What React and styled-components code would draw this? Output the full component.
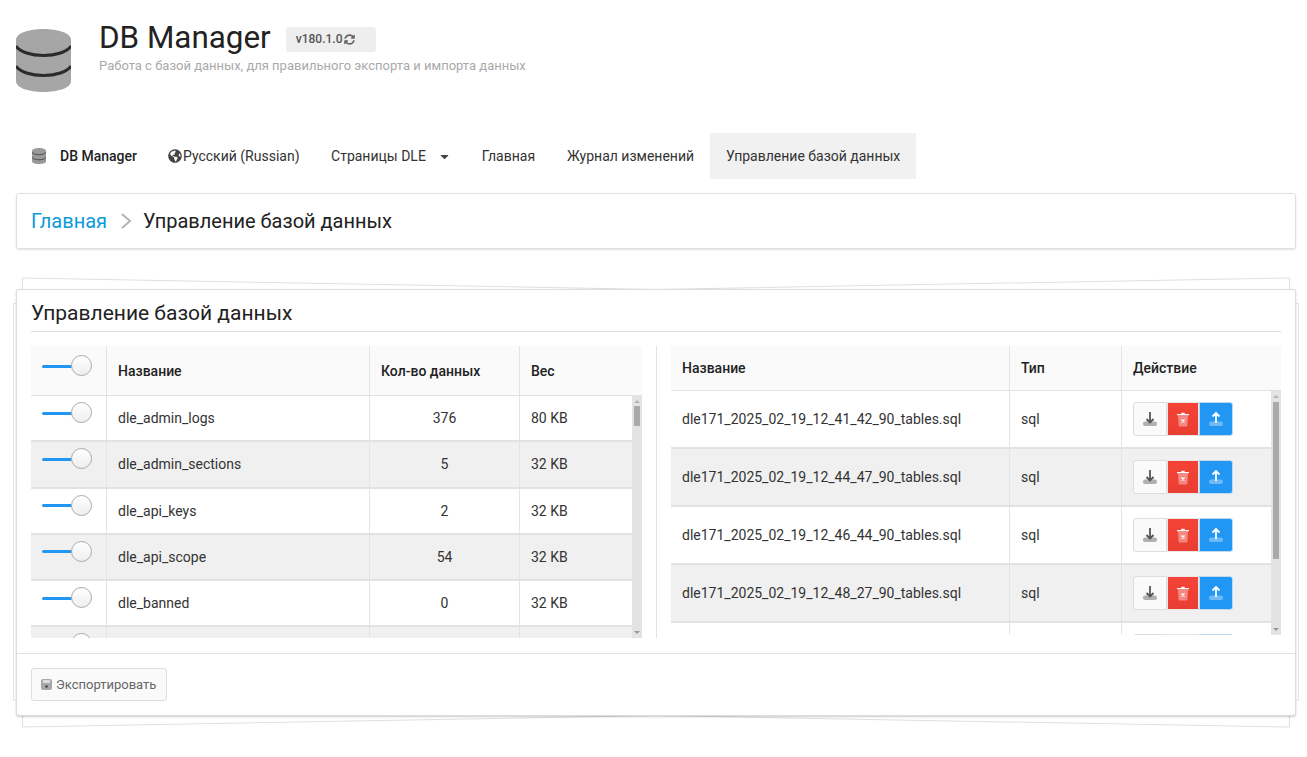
import styled, {createGlobalStyle} from "styled-components";
import {FaCaretDown, FaGlobeAmericas, FaSyncAlt} from "react-icons/fa";

const Global = createGlobalStyle`
  html, body {
    margin: 0;
    padding: 0;
    background: #fff;
  }
  body {
    font-family: Roboto, "Liberation Sans", sans-serif;
    color: #333;
    font-size: 14px;
  }
`;

const Page = styled.div`
  padding: 0 11px 41px 16px;
`;

const Header = styled.header`
  display: flex;
  height: 133px;
  padding-top: 29px;
  box-sizing: border-box;
`;

const HeaderText = styled.div`
  margin-left: 28px;
  margin-top: -11px;
`;

const TitleLine = styled.div`
  display: flex;
  align-items: center;
  height: 39px;
`;

const Title = styled.h1`
  margin: 0;
  font-size: 31.4px;
  font-weight: 400;
  color: #222;
`;

const Version = styled.span`
  display: flex;
  align-items: center;
  gap: 2px;
  box-sizing: border-box;
  width: 90px;
  height: 25px;
  margin-left: 15px;
  margin-top: 4px;
  padding: 0 0 1px 10px;
  background: #eee;
  border-radius: 3px;
  font-size: 12px;
  font-weight: 500;
  color: #555;
`;

const Subtitle = styled.div`
  margin-top: 1px;
  font-size: 13px;
  color: #aaa;
`;

const Nav = styled.nav`
  display: flex;
  height: 46px;
  margin-bottom: 14px;
`;

const NavItem = styled.div`
  display: flex;
  align-items: center;
  gap: ${(props) => props.$gap || 0}px;
  padding: 0 ${(props) => props.$right || 16}px 0 ${(props) => props.$left || 16}px;
  color: ${(props) => (props.$brand ? "#222" : "#333")};
  font-weight: ${(props) => (props.$brand ? 500 : 400)};
  background: ${(props) => (props.$active ? "#f1f1f1" : "transparent")};
`;

const BrandIcon = styled.svg`
  width: 14px;
  height: 16px;
  margin-right: 14px;
`;

const Caret = styled(FaCaretDown)`
  width: 11px;
  height: 13px;
  margin-left: 13px;
  color: #444;
`;

const Crumbs = styled.div`
  display: flex;
  align-items: center;
  box-sizing: border-box;
  height: 56px;
  padding-left: 14px;
  border: 1px solid #e0e0e0;
  border-radius: 3px;
  box-shadow: 0 1px 2px rgba(0, 0, 0, 0.12);
  font-size: 20px;
  color: #222;
  margin-bottom: 40px;
`;

const CrumbLink = styled.a`
  color: #0c9ad8;
`;

const CrumbSep = styled.svg`
  width: 12px;
  height: 18px;
  margin: 0 11px 0 13px;
`;

const CardWrap = styled.div`
  position: relative;
  isolation: isolate;
`;

const Sheet = styled.div`
  position: absolute;
  z-index: -1;
  top: 0;
  bottom: 0;
  left: 6px;
  right: 6px;
  background: #fff;
  border: 1px solid #dfdfdf;
  transform: skewY(${(props) => props.$skew}deg);
`;

const SideSheet = styled.div`
  position: absolute;
  z-index: -1;
  top: 14px;
  bottom: 15px;
  left: -3px;
  right: -3px;
  background: #fff;
  border: 1px solid #e4e4e4;
`;

const Card = styled.section`
  box-sizing: border-box;
  height: 427px;
  background: #fff;
  border: 1px solid #ddd;
  border-radius: 3px;
  box-shadow: 0 1px 2px rgba(0, 0, 0, 0.2);
`;

const CardBody = styled.div`
  box-sizing: border-box;
  height: 364px;
  padding: 0 14px;
  border-bottom: 1px solid #e0e0e0;
`;

const CardTitle = styled.h2`
  margin: 0 0 14px;
  height: 41px;
  line-height: 46px;
  font-size: 21px;
  font-weight: 400;
  color: #222;
  border-bottom: 1px solid #ddd;
`;

const Columns = styled.div`
  display: flex;
  height: 292px;
`;

const Panel = styled.div`
  width: ${(props) => props.$width}px;
  overflow: hidden;
`;

const Divider = styled.div`
  width: 1px;
  margin: 0 14px;
  background: #e4e4e4;
`;

const HeadRow = styled.div`
  display: grid;
  grid-template-columns: ${(props) => props.$cols};
  height: ${(props) => props.$height}px;
  background: #fafafa;
  border-bottom: 1px solid #e2e2e2;
  border-radius: 3px 3px 0 0;
  font-weight: 500;
  color: #222;
`;

const BodyWrap = styled.div`
  display: flex;
  height: ${(props) => props.$height}px;
  overflow: hidden;
`;

const Rows = styled.div`
  flex: 1;
  min-width: 0;
`;

const Row = styled.div`
  display: grid;
  grid-template-columns: ${(props) => props.$cols};
  box-sizing: border-box;
  height: ${(props) => props.$height}px;
  border-bottom: 2px solid #e2e2e2;
  &:nth-child(even) {
    background: #f0f0f0;
  }
`;

const Cell = styled.div`
  display: flex;
  align-items: center;
  justify-content: ${(props) => (props.$center ? "center" : "flex-start")};
  padding: 0 11px;
  border-right: ${(props) => (props.$last ? "0" : "1px solid #e4e4e4")};
  min-width: 0;
`;

const SwitchCell = styled.div`
  display: flex;
  align-items: flex-start;
  padding: ${(props) => props.$top}px 0 0 11px;
  border-right: 1px solid #e4e4e4;
`;

const Toggle = styled.div`
  display: flex;
  align-items: center;
`;

const ToggleTrack = styled.div`
  width: 30px;
  height: 3px;
  margin-top: 1px;
  background: #2196f3;
  border-radius: 2px;
`;

const ToggleKnob = styled.div`
  box-sizing: border-box;
  width: 21px;
  height: 21px;
  margin-left: -1px;
  border: 1px solid #aaa;
  border-radius: 50%;
  background: linear-gradient(#fff, #eee);
`;

const Scrollbar = styled.div`
  position: relative;
  flex: none;
  width: 10px;
  background: #e3e3e3;
`;

const ScrollThumb = styled.div`
  position: absolute;
  top: ${(props) => props.$top}px;
  left: 2px;
  width: 6px;
  height: ${(props) => props.$height}px;
  background: #aaa;
`;

const ArrowUp = styled.div`
  position: absolute;
  top: 4px;
  left: 2px;
  border: 3px solid transparent;
  border-top: 0;
  border-bottom: 3px solid #b5b5b5;
`;

const ArrowDown = styled.div`
  position: absolute;
  bottom: 4px;
  left: 2px;
  border: 3px solid transparent;
  border-bottom: 0;
  border-top: 3px solid #999;
`;

const Actions = styled.div`
  display: flex;
  height: 34px;
`;

const ActionBtn = styled.div`
  display: flex;
  align-items: center;
  justify-content: center;
  box-sizing: border-box;
  width: ${(props) => props.$width}px;
  height: 34px;
  border: 1px solid ${(props) => props.$border};
  border-radius: ${(props) => props.$radius};
  background: ${(props) => props.$bg};
`;

const ActionIcon = styled.svg`
  width: 16px;
  height: 16px;
`;

const Footer = styled.div`
  padding: 14px;
`;

const ExportBtn = styled.div`
  display: inline-flex;
  align-items: center;
  gap: 4px;
  box-sizing: border-box;
  width: 136px;
  height: 33px;
  padding-left: 9px;
  background: #fafafa;
  border: 1px solid #ddd;
  border-radius: 3px;
  font-size: 13px;
  color: #666;
`;

const leftCols = "76px 263px 150px 1fr";
const rightCols = "339px 112px 1fr";

const tables = [
  ["dle_admin_logs", "376", "80 KB"],
  ["dle_admin_sections", "5", "32 KB"],
  ["dle_api_keys", "2", "32 KB"],
  ["dle_api_scope", "54", "32 KB"],
  ["dle_banned", "0", "32 KB"],
  ["", "", ""],
];

const dumps = [
  "dle171_2025_02_19_12_41_42_90_tables.sql",
  "dle171_2025_02_19_12_44_47_90_tables.sql",
  "dle171_2025_02_19_12_46_44_90_tables.sql",
  "dle171_2025_02_19_12_48_27_90_tables.sql",
  "",
];

function DbIcon({color = "#a6a6a6", line = "#2b2b2b", ...props}) {
  return (
    <svg viewBox="0 0 55 63" {...props}>
      <path fill={color} d="M0 11C0 4 13 0 27.500 0S55 4 55 11v41c0 7-13 11-27.500 11S0 59 0 52z" />
      <path fill="none" stroke={line} strokeWidth="3" d="M0 17c4 6 15 9.500 27.500 9.500S51 23 55 17M0 37c4 6 15 9.500 27.500 9.500S51 43 55 37" />
    </svg>
  );
}

function Switch() {
  return (
    <Toggle>
      <ToggleTrack />
      <ToggleKnob />
    </Toggle>
  );
}

function DownloadIcon() {
  return (
    <ActionIcon viewBox="0 0 16 16">
      <rect x="1" y="10.500" width="14" height="4.500" rx="2" fill="#b0b0b0" />
      <path d="M8 1v11M4.500 8L8 11.500 11.500 8" fill="none" stroke="#555" strokeWidth="1.800" />
    </ActionIcon>
  );
}

function TrashIcon() {
  return (
    <ActionIcon viewBox="0 0 16 16">
      <path d="M3 4.500h10l-.6 10a1 1 0 0 1-1 1H4.600a1 1 0 0 1-1-1z" fill="#fff" fillOpacity=".38" />
      <path d="M2 3h4.300V1.800h3.400V3H14v1.200H2z" fill="#fff" />
      <path d="M6.500 8.500l3 3m0-3l-3 3" stroke="#fff" strokeWidth="1.400" />
    </ActionIcon>
  );
}

function UploadIcon() {
  return (
    <ActionIcon viewBox="0 0 16 16">
      <rect x="1" y="10.500" width="14" height="4.500" rx="2" fill="#fff" fillOpacity=".35" />
      <path d="M8 12V2M4.500 5.500L8 2l3.500 3.500" fill="none" stroke="#fff" strokeWidth="1.800" />
    </ActionIcon>
  );
}

function SaveIcon() {
  return (
    <svg width="11" height="11" viewBox="0 0 11 11">
      <rect width="11" height="11" rx="2" fill="#a8a8a8" />
      <rect x="2" y="1" width="7" height="3" fill="#ddd" />
      <circle cx="5.500" cy="7.500" r="1.300" fill="#444" />
    </svg>
  );
}

function App() {
  return (
    <Page>
      <Global />
      <Header>
        <DbIcon width="55" height="63" />
        <HeaderText>
          <TitleLine>
            <Title>DB Manager</Title>
            <Version>
              v180.1.0
              <FaSyncAlt size={11} color="#666" />
            </Version>
          </TitleLine>
          <Subtitle>Работа с базой данных, для правильного экспорта и импорта данных</Subtitle>
        </HeaderText>
      </Header>

      <Nav>
        <NavItem $brand $right={15}>
          <BrandIcon as={DbIcon} color="#9a9a9a" line="#333" />
          DB Manager
        </NavItem>
        <NavItem $left={16} $right={16} $gap={1}>
          <FaGlobeAmericas size={14} color="#444" />
          Русский (Russian)
        </NavItem>
        <NavItem $left={15.5}>
          Страницы DLE
          <Caret />
        </NavItem>
        <NavItem>Главная</NavItem>
        <NavItem>Журнал изменений</NavItem>
        <NavItem $active>Управление базой данных</NavItem>
      </Nav>

      <Crumbs>
        <CrumbLink>Главная</CrumbLink>
        <CrumbSep viewBox="0 0 12 18">
          <path d="M2 2l8 7-8 7" fill="none" stroke="#b5b5b5" strokeWidth="2" />
        </CrumbSep>
        Управление базой данных
      </Crumbs>

      <CardWrap>
        <Sheet $skew={1.05} />
        <Sheet $skew={-1.05} />
        <SideSheet />
        <Card>
          <CardBody>
            <CardTitle>Управление базой данных</CardTitle>
            <Columns>
              <Panel $width={611}>
                <HeadRow $cols={leftCols} $height={49}>
                  <SwitchCell $top={9}>
                    <Switch />
                  </SwitchCell>
                  <Cell>Название</Cell>
                  <Cell>Кол-во данных</Cell>
                  <Cell $last>Вес</Cell>
                </HeadRow>
                <BodyWrap $height={242}>
                  <Rows>
                    {tables.map((item, i) => (
                      <Row key={i} $cols={leftCols} $height={46.3}>
                        <SwitchCell $top={6}>
                          <Switch />
                        </SwitchCell>
                        <Cell>{item[0]}</Cell>
                        <Cell $center>{item[1]}</Cell>
                        <Cell $last>{item[2]}</Cell>
                      </Row>
                    ))}
                  </Rows>
                  <Scrollbar>
                    <ArrowUp />
                    <ScrollThumb $top={10} $height={20} />
                    <ArrowDown />
                  </Scrollbar>
                </BodyWrap>
              </Panel>
              <Divider />
              <Panel $width={610}>
                <HeadRow $cols={rightCols} $height={44}>
                  <Cell>Название</Cell>
                  <Cell>Тип</Cell>
                  <Cell $last>Действие</Cell>
                </HeadRow>
                <BodyWrap $height={244}>
                  <Rows>
                    {dumps.map((name, i) => (
                      <Row key={i} $cols={rightCols} $height={58}>
                        <Cell>{name}</Cell>
                        <Cell>{name && "sql"}</Cell>
                        <Cell $last>
                          <Actions>
                            <ActionBtn $width={34} $bg="#fafafa" $border="#ddd" $radius="3px 0 0 3px">
                              <DownloadIcon />
                            </ActionBtn>
                            <ActionBtn $width={32} $bg="linear-gradient(#f44336, #ea3e33)" $border="#e8e8e8" $radius="0">
                              <TrashIcon />
                            </ActionBtn>
                            <ActionBtn $width={34} $bg="#2196f3" $border="#bcd9ef" $radius="0 3px 3px 0">
                              <UploadIcon />
                            </ActionBtn>
                          </Actions>
                        </Cell>
                      </Row>
                    ))}
                  </Rows>
                  <Scrollbar>
                    <ArrowUp />
                    <ScrollThumb $top={11} $height={157} />
                    <ArrowDown />
                  </Scrollbar>
                </BodyWrap>
              </Panel>
            </Columns>
          </CardBody>
          <Footer>
            <ExportBtn>
              <SaveIcon />
              Экспортировать
            </ExportBtn>
          </Footer>
        </Card>
      </CardWrap>
    </Page>
  );
}

export default App;
